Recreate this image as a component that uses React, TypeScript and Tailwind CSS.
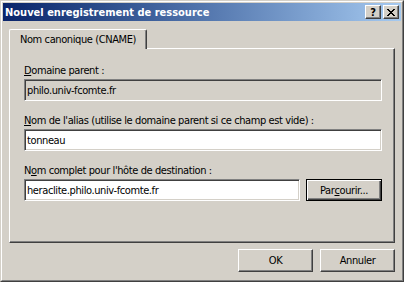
import type { ReactNode } from 'react';

const raised =
  'border border-t-white border-l-white border-r-[#404040] border-b-[#404040] shadow-[inset_-1px_-1px_0_#808080] bg-[#d4d0c8]';
const sunken =
  'border border-t-[#808080] border-l-[#808080] border-r-white border-b-white shadow-[inset_1px_1px_0_#404040,inset_-1px_-1px_0_#d4d0c8]';

// pixel rows of the classic close glyph
const closeRows = ['11000011', '01100110', '00111100', '00011000', '00111100', '01100110', '11000011'];

const CloseGlyph = () => (
  <svg width="8" height="7" viewBox="0 0 8 7" shapeRendering="crispEdges">
    {closeRows.map((row, y) =>
      row.split('').map((c, x) => (c === '1' ? <rect key={`${x}-${y}`} x={x} y={y} width="1" height="1" fill="#000" /> : null))
    )}
  </svg>
);

const CaptionButton = ({ children, className = '' }: { children: ReactNode; className?: string }) => (
  <div className={`${raised} w-[16px] h-[14px] flex items-center justify-center ${className}`}>{children}</div>
);

const Field = ({ value, readOnly = false, className = 'w-[358px]' }: { value: string; readOnly?: boolean; className?: string }) => (
  <div className={`${sunken} ${readOnly ? 'bg-[#d4d0c8]' : 'bg-white'} h-[22px] flex items-center pl-[2px] ${className}`}>
    <span className="leading-[13px]">{value}</span>
  </div>
);

const Label = ({ children }: { children: ReactNode }) => <div className="h-[13px] leading-[13px]">{children}</div>;

const Button = ({ children }: { children: ReactNode }) => (
  <div className={`${raised} w-[75px] h-[23px] flex items-center justify-center leading-[13px]`}>{children}</div>
);

export default function App() {
  return (
    <div className="w-[404px] h-[282px] bg-[#d4d0c8] border border-t-[#d4d0c8] border-l-[#d4d0c8] border-r-[#404040] border-b-[#404040] font-['DejaVu_Sans_Condensed','Liberation_Sans',sans-serif] text-[11px] tracking-[-0.4px] text-black">
      <div className="h-full border border-t-white border-l-white border-r-[#808080] border-b-[#808080] p-px flex flex-col">
        {/* title bar */}
        <div className="h-[18px] flex items-center bg-linear-to-r from-[#0a246a] to-[#a6caf0] pl-[2px] pr-[2px]">
          <span className="flex-1 font-bold text-white leading-[13px] tracking-normal">Nouvel enregistrement de ressource</span>
          <CaptionButton>
            <span className="font-bold text-[11px] leading-none tracking-normal">?</span>
          </CaptionButton>
          <CaptionButton className="ml-[2px]">
            <CloseGlyph />
          </CaptionButton>
        </div>

        <div className="flex-1 px-[6px] pt-[8px] flex flex-col">
          <div className="flex">
            <div className="relative z-10 h-[20px] w-[138px] bg-[#d4d0c8] border-t border-l border-r border-t-white border-l-white border-r-[#404040] shadow-[inset_-1px_0_0_#808080] rounded-t-[2px] flex items-center justify-center pb-[1px] leading-[13px]">
              Nom canonique (CNAME)
            </div>
          </div>

          <div className="-mt-px h-[195px] w-[386px] border border-t-white border-l-white border-r-[#404040] border-b-[#404040] shadow-[inset_-1px_-1px_0_#808080] pt-[15px] pl-[14px]">
            <Label>
              <span className="underline">D</span>omaine parent :
            </Label>
            <div className="mt-[2px]">
              <Field value="philo.univ-fcomte.fr" readOnly />
            </div>

            <div className="mt-[13px]">
              <Label>
                <span className="underline">N</span>om de l'alias (utilise le domaine parent si ce champ est vide) :
              </Label>
            </div>
            <div className="mt-[2px]">
              <Field value="tonneau" />
            </div>

            <div className="mt-[13px]">
              <Label>
                N<span className="underline">o</span>m complet pour l'hôte de destination :
              </Label>
            </div>
            <div className="mt-[2px] flex gap-[6px]">
              <Field value="heraclite.philo.univ-fcomte.fr" className="w-[276px]" />
              <div className="w-[76px] h-[22px] border border-black bg-[#d4d0c8] shadow-[inset_1px_1px_0_#fff,inset_-1px_-1px_0_#404040,inset_-2px_-2px_0_#808080] flex items-center justify-center leading-[13px]">
                Par<span className="underline">c</span>ourir...
              </div>
            </div>
          </div>

          <div className="mt-[6px] flex justify-end gap-[7px]">
            <Button>OK</Button>
            <Button>Annuler</Button>
          </div>
        </div>
      </div>
    </div>
  );
}
